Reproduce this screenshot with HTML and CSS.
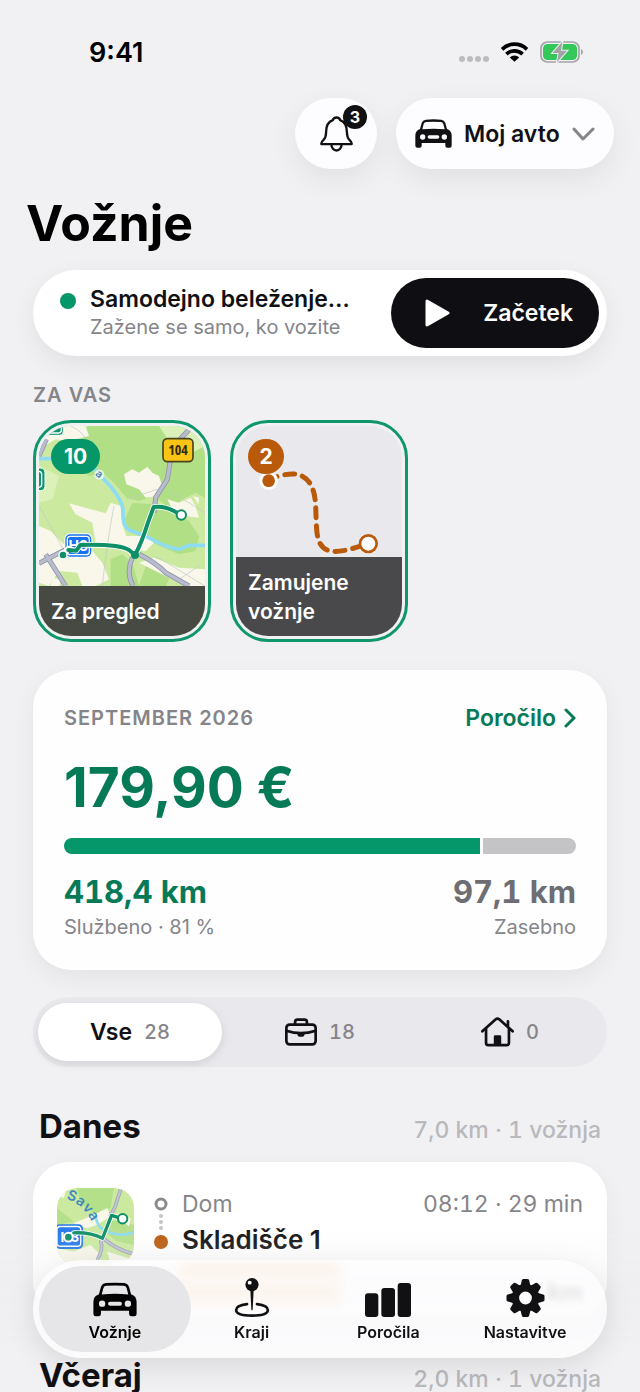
FILE: index.html
```
<!DOCTYPE html>
<html lang="sl">
<head>
    <meta charset="UTF-8">
    <meta name="viewport" content="width=device-width, initial-scale=1.0">
    <title>Vožnje</title>
    <link rel="stylesheet" href="styles.css">
</head>
<body>

<svg class="symbols" aria-hidden="true">
    <symbol id="icon-car" viewBox="0 0 111 85">
        <path fill="currentColor" fill-rule="evenodd" d="M15 29 L20 11 Q23 2 32 1 Q55 -1 79 1 Q88 2 91 11 L96 29 Q110 34 110 48 V79 Q110 85 104 85 H97 Q91 85 91 79 V71 H20 V79 Q20 85 14 85 H7 Q1 85 1 79 V48 Q1 34 15 29 Z M22 30 Q55 26 89 30 L85 14 Q83 8 77 8 Q55 6 34 8 Q28 8 26 14 Z M23 45 A8 8 0 1 0 23 61 A8 8 0 1 0 23 45 Z M88 45 A8 8 0 1 0 88 61 A8 8 0 1 0 88 45 Z M43 48 A5 5 0 0 0 43 58 H68 A5 5 0 0 0 68 48 Z"/>
    </symbol>
</svg>

<div class="app">
    <div class="status-bar">
        <span>9:41</span>
        <div class="status-icons">
            <span class="signal"><i></i><i></i><i></i><i></i></span>
            <svg width="27" height="20" viewBox="0 0 80 58">
                <g fill="none" stroke="#000" stroke-width="11">
                    <path d="M3 21 A53 53 0 0 1 77 21"/>
                    <path d="M16 35 A35 35 0 0 1 64 35"/>
                </g>
                <path d="M26 45 A20 20 0 0 1 54 45 L40 58 Z"/>
            </svg>
            <svg width="44" height="22" viewBox="0 0 132 66">
                <rect x="3" y="3" width="114" height="60" rx="19" fill="none" stroke="#a3a3a7" stroke-width="5"/>
                <rect x="9" y="9" width="102" height="48" rx="13" fill="#34c759"/>
                <path d="M123 24 Q129 27 129 33 Q129 39 123 42 Z" fill="#a3a3a7"/>
                <path d="M67 2 L38 36 H56 L51 64 L81 29 H63 Z" fill="#a3a3a7" stroke="#f1f1f4" stroke-width="6" paint-order="stroke"/>
            </svg>
        </div>
    </div>

    <header class="top-actions">
        <button class="bell" aria-label="Obvestila">
            <svg width="33" height="36" viewBox="0 0 98 106" fill="none" stroke="currentColor" stroke-width="7" stroke-linejoin="round">
                <path d="M4 83 Q3 77 10 71 Q18 64 18 48 Q18 19 38 12 Q40 4 49 4 Q58 4 60 12 Q80 19 80 48 Q80 64 88 71 Q95 77 94 83 Z"/>
                <path d="M34 85 A15 17 0 0 0 64 85"/>
            </svg>
            <span class="bell-count">3</span>
        </button>
        <label class="car-picker">
            <svg width="37" height="29"><use href="#icon-car"/></svg>
            <select aria-label="Vozilo">
                <option>Moj avto</option>
            </select>
            <svg width="23" height="14" viewBox="0 0 23 14" fill="none" stroke="#858589" stroke-width="3" stroke-linecap="round" stroke-linejoin="round"><path d="M2 2 L11 12 L21 2"/></svg>
        </label>
    </header>

    <h1>Vožnje</h1>

    <main>
        <section class="auto-log">
            <span class="auto-dot"></span>
            <div class="auto-text">
                <strong>Samodejno beleženje…</strong>
                <span>Zažene se samo, ko vozite</span>
            </div>
            <button class="start">
                <svg width="25" height="28" viewBox="0 0 25 28"><path d="M2 2 L23 14 L2 26 Z" fill="#fff" stroke="#fff" stroke-width="3" stroke-linejoin="round"/></svg>
                Začetek
            </button>
        </section>

        <h2 class="caption">ZA VAS</h2>
        <div class="tiles">
            <a class="tile" href="#">
                <div class="tile-inner">
                    <svg class="tile-art" viewBox="0 0 498 630" preserveAspectRatio="xMidYMin slice">
                        <rect width="498" height="630" fill="#cbeaa0"/>
                        <path fill="#b1df85" d="M70 40 L150 0 H498 V215 L470 200 L430 220 L395 250 L345 210 L300 225 L262 215 L225 170 L190 140 L150 150 L95 100 Z"/>
                        <path fill="#b1df85" d="M280 230 L345 235 L385 245 L450 285 L480 330 L470 375 L420 385 L340 350 L280 320 L255 285 Z"/>
                        <path fill="#b1df85" d="M215 480 V400 L250 385 L280 410 L300 480 Z M320 420 L400 440 L380 480 H300 Z"/>
                        <path fill="#dcf1b9" d="M360 0 H498 V60 L440 90 L400 60 Z M0 120 L60 150 L40 220 L0 230 Z"/>
                        <g fill="#f8f7ea">
                            <path d="M40 0 H140 L150 30 L90 45 L50 40 L0 70 V30 Z"/>
                            <path d="M255 145 L280 130 L300 140 L325 122 L340 140 L360 150 L370 180 L355 195 L360 210 L320 215 L300 190 L262 175 Z"/>
                            <path d="M90 232 L120 240 L200 262 L215 230 L245 240 L248 290 L262 330 L320 330 L345 350 L320 375 L220 365 L170 350 L160 290 L110 265 Z"/>
                            <path d="M0 300 L35 315 L70 350 L90 370 L160 375 L190 410 L210 460 L170 480 H130 L115 440 L60 435 L30 480 L0 470 Z"/>
                            <path d="M385 220 L420 230 L455 215 L470 240 L480 275 L440 270 L400 250 Z M300 410 L345 395 L420 425 L498 430 V480 H440 L360 440 Z"/>
                            <path d="M462 210 L480 215 L478 235 Z M40 455 L70 460 L60 480 H35 Z"/>
                        </g>
                        <g fill="none">
                            <g stroke="#c3c6c9" stroke-width="2">
                                <path d="M95 0 Q140 20 150 60 M262 220 L355 190 M225 240 Q205 340 190 480 M0 240 L90 400 M350 390 L498 480 M400 200 L498 260 M420 460 L480 420"/>
                            </g>
                            <path stroke="#8edcf3" stroke-width="11" d="M0 98 H60 Q150 95 195 160 Q245 210 252 250 Q250 300 270 312 L320 330 Q380 365 420 370 L450 358 L498 358"/>
                            <g stroke="#8f93ab" stroke-width="15">
                                <path d="M460 0 L400 65 L385 160 L350 215 L345 260 M0 412 L85 368 M300 385 Q350 410 380 440 L450 480 M280 395 Q260 440 282 480 M22 40 L0 90 M20 385 L80 480"/>
                            </g>
                            <g stroke="#b9bccd" stroke-width="10">
                                <path d="M460 0 L400 65 L385 160 L350 215 L345 260 M0 412 L85 368 M300 385 Q350 410 380 440 L450 480 M280 395 Q260 440 282 480 M22 40 L0 90 M20 385 L80 480"/>
                            </g>
                        </g>
                        <g fill="#0f966b" stroke="#fff" stroke-width="3">
                            <rect x="20" y="-20" width="53" height="48" rx="11"/>
                            <rect x="-30" y="126" width="48" height="68" rx="13"/>
                        </g>
                        <g fill="none" stroke="#fff" stroke-width="4">
                            <rect x="26" y="-20" width="41" height="41" rx="8"/>
                            <rect x="-30" y="136" width="38" height="48" rx="9"/>
                        </g>
                        <circle cx="181" cy="146" r="15" fill="#e9f5e2"/>
                        <text class="map-river" x="171" y="155" font-size="32" transform="rotate(40 181 146)">a</text>
                        <rect x="76" y="322" width="84" height="73" rx="16" fill="#fff"/>
                        <rect x="79" y="325" width="78" height="67" rx="14" fill="#1673ee"/>
                        <rect x="85" y="331" width="66" height="55" rx="9" fill="none" stroke="#fff" stroke-width="4"/>
                        <text class="map-sign" x="118" y="374" font-size="42" text-anchor="middle">H3</text>
                        <g fill="none" stroke-linejoin="round" stroke-linecap="round">
                            <path stroke="#fff" stroke-width="17" d="M72 386 L88 368 L112 374 L124 357 Q240 354 270 372 L288 387 Q310 345 325 295 L344 243 Q385 238 426 268"/>
                            <path stroke="#0f8f67" stroke-width="12" d="M88 372 L112 374 L124 357 Q240 354 270 372 L288 387 Q310 345 325 295 L344 243 Q385 238 426 268"/>
                        </g>
                        <circle cx="288" cy="387" r="12" fill="#0f8f67"/>
                        <circle cx="72" cy="387" r="12" fill="#0f8f67" stroke="#fff" stroke-width="4"/>
                        <circle cx="427" cy="267" r="14" fill="#fff" stroke="#0f8f67" stroke-width="6"/>
                        <rect x="372" y="38" width="90" height="69" rx="13" fill="#f9c414" stroke="#4b4420" stroke-width="5"/>
                        <text class="map-road" x="417" y="88" font-size="42" text-anchor="middle">104</text>
                    </svg>
                    <span class="count green">10</span>
                    <span class="tile-label on-map">Za pregled</span>
                </div>
            </a>
            <a class="tile" href="#">
                <div class="tile-inner">
                    <svg class="tile-art" viewBox="0 0 498 630" preserveAspectRatio="xMidYMin slice">
                        <path d="M98 160 C145 144 190 130 219 168 C245 205 237 250 242 310 C248 395 300 385 398 353" fill="none" stroke="#b95a0b" stroke-width="15" stroke-linecap="round" stroke-dasharray="30 24" stroke-dashoffset="4"/>
                        <circle cx="98" cy="164" r="28" fill="#fff"/>
                        <circle cx="98" cy="164" r="19" fill="#b95a0b"/>
                        <circle cx="397" cy="353" r="25" fill="#fff" stroke="#b95a0b" stroke-width="8"/>
                    </svg>
                    <span class="count orange">2</span>
                    <span class="tile-label">Zamujene vožnje</span>
                </div>
            </a>
        </div>

        <section class="summary">
            <div class="row">
                <h2 class="caption">SEPTEMBER 2026</h2>
                <a class="report" href="#">Poročilo
                    <svg width="12" height="20" viewBox="0 0 12 20" fill="none" stroke="currentColor" stroke-width="3" stroke-linecap="round" stroke-linejoin="round"><path d="M2 2 L10 10 L2 18"/></svg>
                </a>
            </div>
            <p class="amount">179,90 €</p>
            <div class="split"><span class="split-work" style="width: 81.3%"></span><span class="split-private"></span></div>
            <div class="row">
                <div class="stat work"><strong>418,4 km</strong><span>Službeno · 81 %</span></div>
                <div class="stat private"><strong>97,1 km</strong><span>Zasebno</span></div>
            </div>
        </section>

        <div class="filter">
            <button class="active">Vse <span>28</span></button>
            <button aria-label="Službeno">
                <svg width="32" height="28" viewBox="0 0 95 82" fill="none" stroke="currentColor" stroke-width="8" stroke-linejoin="round">
                    <rect x="4" y="19" width="87" height="59" rx="10"/>
                    <path d="M30 19 V11 Q30 4 37 4 H58 Q65 4 65 11 V19 M4 37 Q48 52 91 37"/>
                    <path d="M37 44 H58 V49 Q57 55 52 55 H43 Q38 55 37 49 Z" fill="currentColor" stroke="none"/>
                </svg>
                <span>18</span>
            </button>
            <button aria-label="Zasebno">
                <svg width="33" height="30" viewBox="0 0 98 88" fill="none" stroke="currentColor" stroke-width="8" stroke-linecap="round" stroke-linejoin="round">
                    <path d="M4 42 L43 7 Q49 2 55 7 L94 42 M80 27 V12"/>
                    <path d="M15 34 V77 Q15 83 21 83 H77 Q83 83 83 77 V34"/>
                    <path d="M38 83 V58 Q38 54 42 54 H56 Q60 54 60 58 V83 Z" fill="currentColor" stroke="none"/>
                </svg>
                <span>0</span>
            </button>
        </div>

        <div class="day">
            <h2>Danes</h2>
            <span>7,0 km · 1 vožnja</span>
        </div>
        <article class="trip">
            <svg class="trip-map" width="77" height="77" viewBox="0 0 230 230">
                <rect width="230" height="230" fill="#cbeaa0"/>
                <path fill="#b5e08a" d="M60 0 H170 L160 60 L120 85 L70 45 Z M160 95 L230 110 V170 L180 160 L140 130 Z M0 60 L50 100 L0 110 Z"/>
                <path fill="#f8f7ea" d="M0 0 H30 L20 30 L0 25 Z M110 80 L150 60 L160 85 L120 110 L90 120 L50 105 Z M0 180 L50 190 L100 170 L130 200 V230 H20 Z M180 75 L220 90 L215 115 L190 95 Z M150 190 L230 215 V230 H160 Z"/>
                <g fill="none">
                    <path stroke="#8edcf3" stroke-width="8" d="M115 80 Q120 118 140 125 Q190 150 230 132"/>
                    <g stroke="#9fa3b8" stroke-width="11"><path d="M190 5 L172 60 L158 85 M137 150 Q180 185 225 196 M130 155 Q140 185 120 215"/></g>
                    <g stroke="#c2c4d3" stroke-width="6"><path d="M190 5 L172 60 L158 85 M137 150 Q180 185 225 196 M130 155 Q140 185 120 215"/></g>
                </g>
                <g class="map-river" font-size="42">
                    <text transform="translate(28 32) rotate(20)">S</text>
                    <text transform="translate(54 44) rotate(34)">a</text>
                    <text transform="translate(75 60) rotate(48)">v</text>
                    <text transform="translate(92 79) rotate(60)">a</text>
                </g>
                <rect x="-6" y="108" width="84" height="74" rx="14" fill="#2578ea"/>
                <rect x="0" y="115" width="71" height="59" rx="10" fill="none" stroke="#fff" stroke-width="4"/>
                <text class="map-sign" x="38" y="160" font-size="40" text-anchor="middle">H3</text>
                <g fill="none" stroke-linejoin="round" stroke-linecap="round">
                    <path stroke="#fff" stroke-width="15" d="M34 147 L50 134 Q100 132 136 150 L163 82 L196 92"/>
                    <path stroke="#0f8f67" stroke-width="10" d="M50 134 Q100 132 136 150 L163 82 L196 92"/>
                </g>
                <circle cx="34" cy="147" r="13" fill="#0f8f67" stroke="#fff" stroke-width="6"/>
                <circle cx="196" cy="92" r="14" fill="#fff" stroke="#0f8f67" stroke-width="6"/>
            </svg>
            <svg class="trip-stops" width="14" height="77" viewBox="0 0 14 77">
                <circle cx="7" cy="18" r="5" fill="none" stroke="#8a8a8e" stroke-width="3"/>
                <g fill="#c4c4c6"><circle cx="7" cy="30" r="2"/><circle cx="7" cy="36" r="2"/><circle cx="7" cy="42" r="2"/></g>
                <circle cx="7" cy="56" r="7" fill="#b95a0b"/>
            </svg>
            <div class="trip-body">
                <div class="row"><span class="from">Dom</span><span class="from">08:12 · 29 min</span></div>
                <strong class="to">Skladišče 1</strong>
                <div class="row trip-extra">
                    <div class="hint"><i></i><i></i></div>
                    <span class="trip-km">km</span>
                </div>
            </div>
        </article>

        <div class="day">
            <h2>Včeraj</h2>
            <span>2,0 km · 1 vožnja</span>
        </div>
    </main>
</div>

<div class="fade"></div>
<nav class="tab-bar">
    <a class="active" href="#">
        <svg width="44" height="35"><use href="#icon-car"/></svg>
        Vožnje
    </a>
    <a href="#">
        <svg width="36" height="39" viewBox="0 0 106 118">
            <path d="M38 79 Q5 83 5 97 Q5 114 53 114 Q101 114 101 97 Q101 83 68 79" fill="none" stroke="currentColor" stroke-width="8" stroke-linecap="round"/>
            <path d="M48 36 H58 L55 96 Q53 100 51 96 Z" fill="currentColor"/>
            <circle cx="53" cy="20" r="20" fill="currentColor"/>
            <circle cx="46" cy="14" r="6" fill="#fff"/>
        </svg>
        Kraji
    </a>
    <a href="#">
        <svg width="46" height="34" viewBox="0 0 138 102" fill="currentColor">
            <rect y="31" width="40" height="71" rx="9"/>
            <rect x="49" y="15" width="41" height="87" rx="9"/>
            <rect x="98" width="40" height="102" rx="9"/>
        </svg>
        Poročila
    </a>
    <a href="#">
        <svg width="39" height="38" viewBox="-58 -58 116 116">
            <g fill="currentColor">
                <path id="tooth" d="M-15 -38 L-11 -54 Q-10 -58 -6 -58 H6 Q10 -58 11 -54 L15 -38 Z"/>
                <use href="#tooth" transform="rotate(45)"/>
                <use href="#tooth" transform="rotate(90)"/>
                <use href="#tooth" transform="rotate(135)"/>
                <use href="#tooth" transform="rotate(180)"/>
                <use href="#tooth" transform="rotate(225)"/>
                <use href="#tooth" transform="rotate(270)"/>
                <use href="#tooth" transform="rotate(315)"/>
            </g>
            <circle r="31" fill="none" stroke="currentColor" stroke-width="23"/>
        </svg>
        Nastavitve
    </a>
</nav>

</body>
</html>
```
FILE: styles.css
```
* {
    box-sizing: border-box;
}

body {
    margin: 0;
    background-color: #f1f1f4;
    color: #111114;
    font-family: Inter, "Liberation Sans", sans-serif;
    font-size: 20px;
}

h1, h2, p {
    margin: 0;
}

a {
    color: inherit;
    text-decoration: none;
}

button, select {
    border: none;
    background: none;
    padding: 0;
    color: inherit;
    font: inherit;
    cursor: pointer;
}

svg {
    display: block;
    flex: none;
}

.symbols {
    position: absolute;
    width: 0;
    height: 0;
}

.app {
    height: 100vh;
    overflow-y: auto;
    scrollbar-width: none;
}

main {
    padding: 0 33px;
}

.row {
    display: flex;
    justify-content: space-between;
    align-items: center;
}

/* status bar */

.status-bar {
    display: flex;
    justify-content: space-between;
    align-items: center;
    height: 68px;
    padding: 36px 56px 0 89px;
    color: #000;
    font-size: 27px;
    font-weight: 600;
}

.status-icons {
    display: flex;
    align-items: center;
    gap: 12px;
}

.signal {
    display: flex;
    gap: 2px;
    padding-top: 13px;
}

.signal i {
    width: 6px;
    height: 6px;
    border-radius: 50%;
    background-color: #bcbcc0;
}

/* header */

.top-actions {
    display: flex;
    justify-content: flex-end;
    gap: 19px;
    padding: 30px 26px 0;
}

.bell, .car-picker {
    display: flex;
    align-items: center;
    justify-content: center;
    height: 71px;
    border-radius: 36px;
    background-color: #fdfdff;
    box-shadow: 0 10px 30px rgba(0, 0, 0, 0.07);
}

.bell {
    position: relative;
    width: 82px;
}

.bell-count {
    position: absolute;
    top: 7px;
    right: 10px;
    width: 24px;
    border-radius: 12px;
    background-color: #111114;
    color: white;
    font-size: 16px;
    font-weight: 700;
    line-height: 24px;
}

.car-picker {
    gap: 12px;
    padding: 0 19px;
    font-size: 23px;
    font-weight: 600;
}

.car-picker select {
    appearance: none;
}

h1 {
    padding: 0 26px;
    margin: 22px 0 15px;
    color: #000;
    font-size: 50px;
    line-height: 64px;
}

/* automatic logging */

.auto-log {
    display: flex;
    align-items: center;
    padding: 8px 8px 8px 27px;
    border-radius: 43px;
    background-color: white;
    box-shadow: 0 8px 24px rgba(0, 0, 0, 0.07);
}

.auto-dot {
    align-self: flex-start;
    width: 16px;
    height: 16px;
    margin: 15px 14px 0 0;
    border-radius: 50%;
    background-color: #059669;
}

.auto-text {
    flex: 1;
    display: flex;
    flex-direction: column;
    line-height: 28px;
}

.auto-text strong {
    font-size: 23px;
    font-weight: 600;
}

.auto-text span {
    color: #858589;
}

.start {
    display: flex;
    align-items: center;
    justify-content: space-between;
    width: 208px;
    height: 70px;
    padding: 0 26px 0 34px;
    border-radius: 35px;
    background-color: #0f0f13;
    color: white;
    font-size: 23px;
    font-weight: 600;
}

/* suggestions */

.caption {
    color: #858589;
    font-size: 20px;
    font-weight: 600;
    letter-spacing: 1px;
    line-height: 24px;
}

.auto-log + .caption {
    margin: 27px 0 13px;
}

.tiles {
    display: flex;
    gap: 19px;
}

.tile {
    width: 178px;
    padding: 3px;
    border: 3px solid #0f966b;
    border-radius: 38px;
}

.tile-inner {
    position: relative;
    display: flex;
    align-items: flex-end;
    height: 210px;
    border-radius: 32px;
    background-color: #e9e9ed;
    overflow: hidden;
}

.tile-art {
    position: absolute;
    top: 0;
    left: 0;
    width: 100%;
    height: 100%;
}

.count {
    position: absolute;
    top: 13px;
    left: 12px;
    min-width: 36px;
    border-radius: 18px;
    color: white;
    font-size: 21px;
    font-weight: 700;
    line-height: 35px;
    text-align: center;
}

.count.green {
    padding: 0 13px;
    background-color: #059669;
}

.count.orange {
    background-color: #b95a0b;
}

.tile-label {
    position: relative;
    flex: 1;
    padding: 11px 12px 10px;
    background-color: #49494b;
    color: white;
    font-size: 21px;
    font-weight: 600;
    line-height: 29px;
}

.tile-label.on-map {
    background-color: #464a42;
}

.map-river {
    fill: #3f86bf;
    font-weight: 600;
}

.map-sign {
    fill: white;
    font-weight: 700;
}

.map-road {
    fill: #332d10;
    font-family: "Open Sans", sans-serif;
    font-stretch: condensed;
    font-weight: 700;
}

/* month summary */

.summary {
    margin-top: 28px;
    padding: 32px 31px 29px;
    border-radius: 38px;
    background-color: #fefefe;
    box-shadow: 0 8px 24px rgba(0, 0, 0, 0.06);
}

.report {
    display: flex;
    align-items: center;
    gap: 8px;
    color: #067a56;
    font-size: 23px;
    font-weight: 600;
    line-height: 32px;
}

.amount {
    margin: 25px 0 23px;
    color: #067a56;
    font-size: 55px;
    font-weight: 700;
    line-height: 56px;
}

.split {
    display: flex;
    gap: 3px;
    height: 16px;
    margin-bottom: 20px;
    border-radius: 8px;
    overflow: hidden;
}

.split-work {
    background-color: #059669;
}

.split-private {
    flex: 1;
    background-color: #c4c4c6;
}

.stat {
    display: flex;
    flex-direction: column;
    gap: 3px;
    color: #858589;
    line-height: 28px;
}

.stat strong {
    font-size: 31px;
    font-variant-numeric: tabular-nums;
    line-height: 36px;
}

.work strong {
    color: #067a56;
}

.private {
    text-align: right;
}

.private strong {
    color: #6e6e72;
}

/* trip filter */

.filter {
    display: flex;
    gap: 6px;
    margin-top: 27px;
    padding: 6px 5px;
    border-radius: 35px;
    background-color: #e9e9ed;
}

.filter button {
    flex: 1;
    display: flex;
    align-items: center;
    justify-content: center;
    gap: 12px;
    height: 58px;
    border-radius: 29px;
    font-size: 23px;
    font-weight: 600;
}

.filter button.active {
    background-color: white;
    box-shadow: 0 3px 10px rgba(0, 0, 0, 0.1);
}

.filter span {
    color: #858589;
    font-size: 20px;
    font-weight: 500;
    font-variant-numeric: tabular-nums;
}

/* days and trips */

.day {
    display: flex;
    justify-content: space-between;
    align-items: baseline;
    margin-top: 39px;
    padding: 0 6px;
    line-height: 40px;
}

.day h2 {
    font-size: 33px;
}

.day span {
    color: #b9b9bc;
    font-size: 23px;
    font-weight: 500;
    font-variant-numeric: tabular-nums;
}

.trip {
    display: flex;
    margin-top: 12px;
    padding: 24px 24px 8px;
    border-radius: 36px;
    background-color: white;
    box-shadow: 0 8px 24px rgba(0, 0, 0, 0.05);
}

.trip-map {
    margin-top: 2px;
    border-radius: 20px;
}

.trip-stops {
    margin: 0 14px 0 20px;
}

.trip-body {
    flex: 1;
    line-height: 36px;
}

.from {
    color: #858589;
    font-size: 23px;
    font-variant-numeric: tabular-nums;
}

.to {
    font-size: 26px;
    font-weight: 600;
}

.hint {
    display: flex;
    flex-direction: column;
    justify-content: space-between;
    width: 170px;
    height: 46px;
    margin-left: -8px;
    padding: 3px 10px 12px;
    border-radius: 12px;
    background-color: #ffdcb8;
}

.hint i {
    height: 9px;
    background-color: #f8c08a;
}

.trip-km {
    padding-top: 14px;
    color: #3c3c40;
    font-size: 24px;
    font-weight: 700;
}

.trip + .day {
    margin-top: 37px;
}

/* bottom bar */

.fade {
    position: fixed;
    right: 0;
    bottom: 0;
    left: 0;
    height: 170px;
    background: linear-gradient(rgba(236, 236, 238, 0), rgba(236, 236, 238, 0.3) 40%, rgba(236, 236, 238, 0) 75%);
    pointer-events: none;
}

.tab-bar {
    position: fixed;
    right: 33px;
    bottom: 34px;
    left: 33px;
    display: flex;
    padding: 6px;
    border-radius: 49px;
    background-color: rgba(253, 253, 254, 0.82);
    backdrop-filter: blur(3px);
    box-shadow: 0 8px 30px rgba(0, 0, 0, 0.1);
}

.tab-bar a {
    flex: 1;
    display: flex;
    flex-direction: column;
    align-items: center;
    justify-content: flex-end;
    gap: 4px;
    height: 86px;
    padding-bottom: 9px;
    border-radius: 43px;
    font-size: 16px;
    font-weight: 600;
    line-height: 22px;
}

/* items overlap so that the active pill can be wider than its step */
.tab-bar a + a {
    margin-left: -15px;
}

.tab-bar a.active {
    background-color: #e6e6e8;
    color: #000;
}
```
